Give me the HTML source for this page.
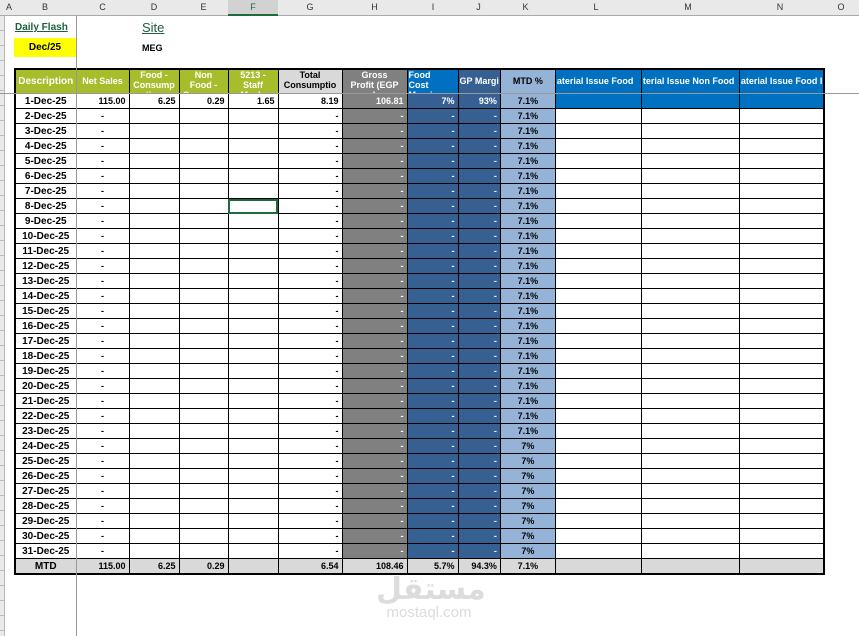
<!DOCTYPE html>
<html><head><meta charset="utf-8"><style>
body{margin:0;width:859px;height:636px;overflow:hidden;background:#fff;position:relative;font-family:"Liberation Sans",Arial,sans-serif;font-weight:bold;}
.ch{position:absolute;top:0;left:0;width:859px;height:15px;background:#e9e9e9;border-bottom:1px solid #aaa;font-size:9px;font-weight:normal;color:#333;}
.ch span{position:absolute;top:2px;text-align:center;}
.rh{position:absolute;left:0;top:16px;width:4px;height:620px;background:repeating-linear-gradient(#e9e9e9 0,#e9e9e9 14px,#bbb 14px,#bbb 15px);border-right:1px solid #bbb;}
table{position:absolute;left:14px;top:68px;border-collapse:collapse;table-layout:fixed;border:2px solid #000;}
td{border:1px solid #000;height:14px;padding:0 3px;font-size:9px;text-align:right;white-space:nowrap;overflow:hidden;line-height:13px;}
td:first-child{text-align:center;font-size:10px;}
thead td{height:23px;color:#fff;text-align:center;line-height:10px;vertical-align:top;padding:0 1px;}
thead td div{height:23px;overflow:hidden;}
thead td div.v{line-height:23px;}
.g{background:#a8bd2b}.lg{background:#d9d9d9;color:#000!important}.gp{background:#808080;color:#fff}.b{background:#366092;color:#fff}.k{background:#95b3d7;text-align:center}.bl{background:#0070c0;color:#fff}
tr.m td{background:#d9d9d9}
</style></head><body>
<div class="ch">
<span style="left:4px;width:10px">A</span><span style="left:14px;width:62px">B</span><span style="left:76px;width:53px">C</span><span style="left:129px;width:50px">D</span><span style="left:179px;width:49px">E</span><span style="left:228px;width:50px;background:#d2d2d2;height:12px;border-bottom:2px solid #1e6b3c;top:0;padding-top:2px;color:#1e6b3c">F</span><span style="left:278px;width:64px">G</span><span style="left:342px;width:65px">H</span><span style="left:407px;width:52px">I</span><span style="left:459px;width:39px">J</span><span style="left:498px;width:55px">K</span><span style="left:553px;width:86px">L</span><span style="left:639px;width:98px">M</span><span style="left:737px;width:86px">N</span><span style="left:823px;width:36px">O</span>
</div>
<div class="rh"></div>
<div style="position:absolute;left:76px;top:16px;width:1px;height:620px;background:#999;z-index:5"></div>
<div style="position:absolute;left:0;top:93px;width:859px;height:1px;background:#999;z-index:5"></div>
<div style="position:absolute;left:15px;top:22px;font-size:10px;color:#1e5e3a;text-decoration:underline">Daily Flash</div>
<div style="position:absolute;left:14px;top:38px;width:62px;height:19px;background:#ffff00;font-size:10px;text-align:center;line-height:19px">Dec/25</div>
<div style="position:absolute;left:142px;top:20px;font-size:13px;font-weight:normal;color:#1e5e3a;text-decoration:underline">Site</div>
<div style="position:absolute;left:142px;top:43px;font-size:9px">MEG</div>
<table>
<colgroup><col style="width:61px"><col style="width:53px"><col style="width:50px"><col style="width:49px"><col style="width:50px"><col style="width:64px"><col style="width:65px"><col style="width:51px"><col style="width:39px"><col style="width:55px"><col style="width:86px"><col style="width:98px"><col style="width:83px"></colgroup>
<thead><tr><td class="g" style="font-size:10px"><div class="v">Description</div></td><td class="g"><div class="v">Net Sales</div></td><td class="g"><div>Food -<br>Consump<br>tion</div></td><td class="g"><div>Non<br>Food -<br>Consump</div></td><td class="g"><div>5213 -<br>Staff<br>Meals</div></td><td class="lg"><div>Total<br>Consumptio<br>n</div></td><td class="gp"><div>Gross<br>Profit (EGP<br>)</div></td><td class="bl" style="text-align:left"><div>Food<br>Cost<br>Margin</div></td><td class="b" style="text-align:left"><div class="v">GP Margi</div></td><td class="k"><div class="v" style="color:#000">MTD %</div></td><td class="bl" style="text-align:left"><div class="v">aterial Issue Food</div></td><td class="bl" style="text-align:left"><div class="v">terial Issue Non Food</div></td><td class="bl" style="text-align:left"><div class="v">aterial Issue Food I</div></td></tr></thead>
<tbody>
<tr><td>1-Dec-25</td><td>115.00</td><td>6.25</td><td>0.29</td><td>1.65</td><td>8.19</td><td class="gp">106.81</td><td class="b">7%</td><td class="b">93%</td><td class="k">7.1%</td><td class="bl"></td><td class="bl"></td><td class="bl"></td></tr>
<tr><td>2-Dec-25</td><td style="text-align:center">-</td><td></td><td></td><td></td><td>-</td><td class="gp">-</td><td class="b">-</td><td class="b">-</td><td class="k">7.1%</td><td></td><td></td><td></td></tr>
<tr><td>3-Dec-25</td><td style="text-align:center">-</td><td></td><td></td><td></td><td>-</td><td class="gp">-</td><td class="b">-</td><td class="b">-</td><td class="k">7.1%</td><td></td><td></td><td></td></tr>
<tr><td>4-Dec-25</td><td style="text-align:center">-</td><td></td><td></td><td></td><td>-</td><td class="gp">-</td><td class="b">-</td><td class="b">-</td><td class="k">7.1%</td><td></td><td></td><td></td></tr>
<tr><td>5-Dec-25</td><td style="text-align:center">-</td><td></td><td></td><td></td><td>-</td><td class="gp">-</td><td class="b">-</td><td class="b">-</td><td class="k">7.1%</td><td></td><td></td><td></td></tr>
<tr><td>6-Dec-25</td><td style="text-align:center">-</td><td></td><td></td><td></td><td>-</td><td class="gp">-</td><td class="b">-</td><td class="b">-</td><td class="k">7.1%</td><td></td><td></td><td></td></tr>
<tr><td>7-Dec-25</td><td style="text-align:center">-</td><td></td><td></td><td></td><td>-</td><td class="gp">-</td><td class="b">-</td><td class="b">-</td><td class="k">7.1%</td><td></td><td></td><td></td></tr>
<tr><td>8-Dec-25</td><td style="text-align:center">-</td><td></td><td></td><td style="outline:2px solid #1e6b3c;outline-offset:-2px"></td><td>-</td><td class="gp">-</td><td class="b">-</td><td class="b">-</td><td class="k">7.1%</td><td></td><td></td><td></td></tr>
<tr><td>9-Dec-25</td><td style="text-align:center">-</td><td></td><td></td><td></td><td>-</td><td class="gp">-</td><td class="b">-</td><td class="b">-</td><td class="k">7.1%</td><td></td><td></td><td></td></tr>
<tr><td>10-Dec-25</td><td style="text-align:center">-</td><td></td><td></td><td></td><td>-</td><td class="gp">-</td><td class="b">-</td><td class="b">-</td><td class="k">7.1%</td><td></td><td></td><td></td></tr>
<tr><td>11-Dec-25</td><td style="text-align:center">-</td><td></td><td></td><td></td><td>-</td><td class="gp">-</td><td class="b">-</td><td class="b">-</td><td class="k">7.1%</td><td></td><td></td><td></td></tr>
<tr><td>12-Dec-25</td><td style="text-align:center">-</td><td></td><td></td><td></td><td>-</td><td class="gp">-</td><td class="b">-</td><td class="b">-</td><td class="k">7.1%</td><td></td><td></td><td></td></tr>
<tr><td>13-Dec-25</td><td style="text-align:center">-</td><td></td><td></td><td></td><td>-</td><td class="gp">-</td><td class="b">-</td><td class="b">-</td><td class="k">7.1%</td><td></td><td></td><td></td></tr>
<tr><td>14-Dec-25</td><td style="text-align:center">-</td><td></td><td></td><td></td><td>-</td><td class="gp">-</td><td class="b">-</td><td class="b">-</td><td class="k">7.1%</td><td></td><td></td><td></td></tr>
<tr><td>15-Dec-25</td><td style="text-align:center">-</td><td></td><td></td><td></td><td>-</td><td class="gp">-</td><td class="b">-</td><td class="b">-</td><td class="k">7.1%</td><td></td><td></td><td></td></tr>
<tr><td>16-Dec-25</td><td style="text-align:center">-</td><td></td><td></td><td></td><td>-</td><td class="gp">-</td><td class="b">-</td><td class="b">-</td><td class="k">7.1%</td><td></td><td></td><td></td></tr>
<tr><td>17-Dec-25</td><td style="text-align:center">-</td><td></td><td></td><td></td><td>-</td><td class="gp">-</td><td class="b">-</td><td class="b">-</td><td class="k">7.1%</td><td></td><td></td><td></td></tr>
<tr><td>18-Dec-25</td><td style="text-align:center">-</td><td></td><td></td><td></td><td>-</td><td class="gp">-</td><td class="b">-</td><td class="b">-</td><td class="k">7.1%</td><td></td><td></td><td></td></tr>
<tr><td>19-Dec-25</td><td style="text-align:center">-</td><td></td><td></td><td></td><td>-</td><td class="gp">-</td><td class="b">-</td><td class="b">-</td><td class="k">7.1%</td><td></td><td></td><td></td></tr>
<tr><td>20-Dec-25</td><td style="text-align:center">-</td><td></td><td></td><td></td><td>-</td><td class="gp">-</td><td class="b">-</td><td class="b">-</td><td class="k">7.1%</td><td></td><td></td><td></td></tr>
<tr><td>21-Dec-25</td><td style="text-align:center">-</td><td></td><td></td><td></td><td>-</td><td class="gp">-</td><td class="b">-</td><td class="b">-</td><td class="k">7.1%</td><td></td><td></td><td></td></tr>
<tr><td>22-Dec-25</td><td style="text-align:center">-</td><td></td><td></td><td></td><td>-</td><td class="gp">-</td><td class="b">-</td><td class="b">-</td><td class="k">7.1%</td><td></td><td></td><td></td></tr>
<tr><td>23-Dec-25</td><td style="text-align:center">-</td><td></td><td></td><td></td><td>-</td><td class="gp">-</td><td class="b">-</td><td class="b">-</td><td class="k">7.1%</td><td></td><td></td><td></td></tr>
<tr><td>24-Dec-25</td><td style="text-align:center">-</td><td></td><td></td><td></td><td>-</td><td class="gp">-</td><td class="b">-</td><td class="b">-</td><td class="k">7%</td><td></td><td></td><td></td></tr>
<tr><td>25-Dec-25</td><td style="text-align:center">-</td><td></td><td></td><td></td><td>-</td><td class="gp">-</td><td class="b">-</td><td class="b">-</td><td class="k">7%</td><td></td><td></td><td></td></tr>
<tr><td>26-Dec-25</td><td style="text-align:center">-</td><td></td><td></td><td></td><td>-</td><td class="gp">-</td><td class="b">-</td><td class="b">-</td><td class="k">7%</td><td></td><td></td><td></td></tr>
<tr><td>27-Dec-25</td><td style="text-align:center">-</td><td></td><td></td><td></td><td>-</td><td class="gp">-</td><td class="b">-</td><td class="b">-</td><td class="k">7%</td><td></td><td></td><td></td></tr>
<tr><td>28-Dec-25</td><td style="text-align:center">-</td><td></td><td></td><td></td><td>-</td><td class="gp">-</td><td class="b">-</td><td class="b">-</td><td class="k">7%</td><td></td><td></td><td></td></tr>
<tr><td>29-Dec-25</td><td style="text-align:center">-</td><td></td><td></td><td></td><td>-</td><td class="gp">-</td><td class="b">-</td><td class="b">-</td><td class="k">7%</td><td></td><td></td><td></td></tr>
<tr><td>30-Dec-25</td><td style="text-align:center">-</td><td></td><td></td><td></td><td>-</td><td class="gp">-</td><td class="b">-</td><td class="b">-</td><td class="k">7%</td><td></td><td></td><td></td></tr>
<tr><td>31-Dec-25</td><td style="text-align:center">-</td><td></td><td></td><td></td><td>-</td><td class="gp">-</td><td class="b">-</td><td class="b">-</td><td class="k">7%</td><td></td><td></td><td></td></tr>
<tr class="m"><td>MTD</td><td>115.00</td><td>6.25</td><td>0.29</td><td></td><td>6.54</td><td>108.46</td><td>5.7%</td><td>94.3%</td><td style="text-align:center">7.1%</td><td></td><td></td><td></td></tr>
</tbody></table>
<div style="position:absolute;left:376px;top:574px;width:106px;text-align:center;font-size:30px;color:#dcdcdc;font-family:'DejaVu Sans',sans-serif;line-height:32px">مستقل</div>
<div style="position:absolute;left:376px;top:604px;width:106px;text-align:center;font-size:15px;font-weight:normal;color:#dcdcdc">mostaql.com</div>
</body></html>
